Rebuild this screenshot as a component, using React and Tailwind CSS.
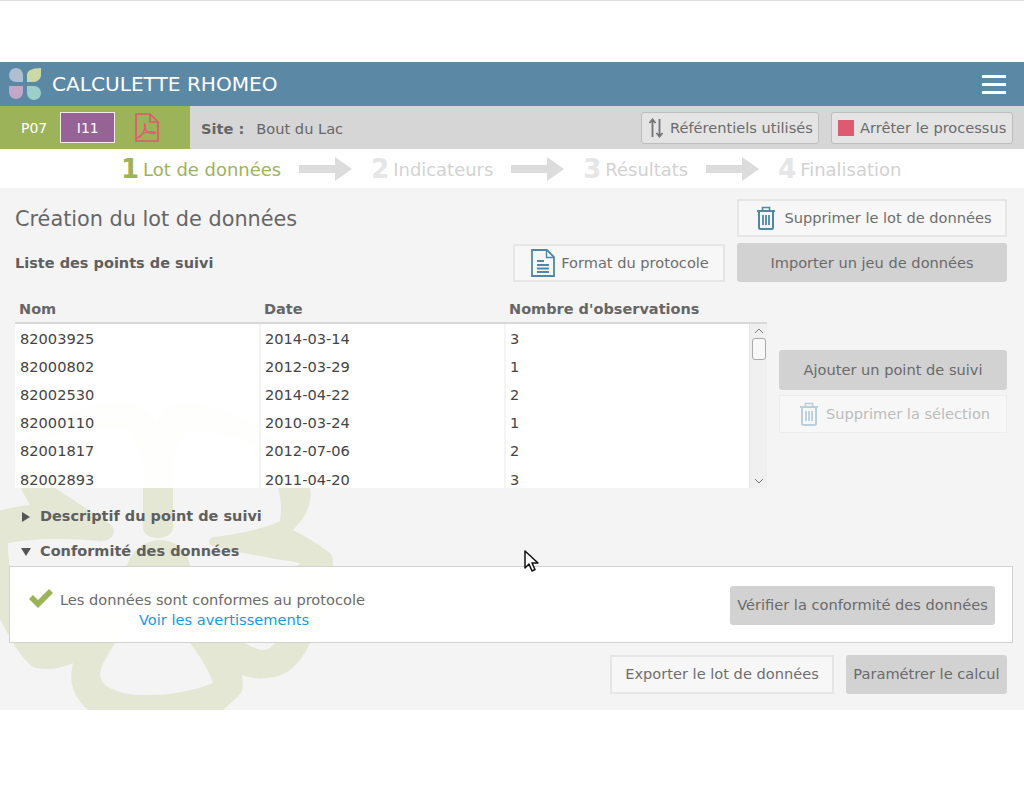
const font = "font-['DejaVu_Sans',sans-serif]";

const rows = [
  ['82003925', '2014-03-14', '3'],
  ['82000802', '2012-03-29', '1'],
  ['82002530', '2014-04-22', '2'],
  ['82000110', '2010-03-24', '1'],
  ['82001817', '2012-07-06', '2'],
  ['82002893', '2011-04-20', '3'],
];

const steps = [
  { n: '1', label: 'Lot de données', active: true },
  { n: '2', label: 'Indicateurs' },
  { n: '3', label: 'Résultats' },
  { n: '4', label: 'Finalisation' },
];

const Logo = () => (
  <svg width="34" height="34" viewBox="0 0 34 34" className="shrink-0">
    <path d="M1 8a7 7 0 0 1 14 0v7H8a7 7 0 0 1-7-7z" fill="#b0bfd0" />
    <path d="M19 15V8c0-4 4-7 14-7v7c0 4-4 7-7 7z" fill="#cdd9a4" />
    <path d="M1 19h14v6a7 7 0 0 1-7 7 7 7 0 0 1-7-7z" fill="#c3a7c6" />
    <path d="M19 19h7a7 7 0 1 1-7 7z" fill="#9ad0c8" />
  </svg>
);

const PdfIcon = () => (
  <svg width="24" height="29" viewBox="0 0 24 29" fill="none" stroke="#e5566f" strokeWidth="1.7">
    <path d="M1 1h14l8 8v19H1z" />
    <path d="M15 1v8h8" />
    <path d="M3 25c3-1 6-6 7-10 .4-2 0-5-.5-4-.8 2 1 6 3 8 2 1.500 7 2 8 1s-5-1.500-8-1-7 3-10 6z" strokeWidth="1.200" />
  </svg>
);

const SortIcon = () => (
  <svg width="16" height="20" viewBox="0 0 16 20" fill="none" stroke="#737373" strokeWidth="1.800">
    <path d="M4.500 19V2M1.500 5l3-3.500 3 3.500" />
    <path d="M11.500 1v17M8.500 15l3 3.500 3-3.500" />
  </svg>
);

const TrashIcon = ({ className }) => (
  <svg width="20" height="24" viewBox="0 0 20 24" fill="none" stroke="currentColor" className={className}>
    <path d="M1 5h18" strokeWidth="2" />
    <path d="M6.500 5V1.500h7V5" strokeWidth="1.600" />
    <path d="M3 5v16.500a1.500 1.500 0 0 0 1.500 1.500h11a1.500 1.500 0 0 0 1.500-1.500V5" strokeWidth="2" />
    <path d="M7 9v10M10 9v10M13 9v10" strokeWidth="1.800" />
  </svg>
);

const DocIcon = () => (
  <svg width="24" height="28" viewBox="0 0 24 28" fill="none" stroke="#4f87a6" strokeWidth="1.800">
    <path d="M1 1h15l7 7v19H1z" />
    <path d="M15.500 1v7.500H23" strokeWidth="1.400" />
    <path d="M6 12h7M6 16h12M6 19.500h12M6 23h12" />
  </svg>
);

const StepArrow = () => (
  <svg width="53" height="24" viewBox="0 0 53 24" className="shrink-0">
    <path d="M0 8h36V0l17 12-17 12v-8H0z" fill="#dcdcdc" />
  </svg>
);

// watermark, drawn in page coordinates (main starts at y=188)
const Flower = () => (
  <svg width="340" height="522" viewBox="0 188 340 522" className="absolute left-0 top-0">
    <path
      fill="#e4e7d3"
      fillRule="evenodd"
      d="M157 423C148 408 136 402 122 402C95 402 60 414 38 428C22 438 14 452 15 466C16 476 18 482 21 488C24 495 27 500 30 505C20 506 8 508 -5 512L-5 610L13 643C20 654 26 662 33 667C45 671 60 669 73 663C71 672 71 680 72 684C74 694 80 703 88 710C100 722 120 730 155 730C190 730 212 722 223 710C234 700 241 695 242 690C243 684 243 680 242 675C250 678 258 679 267 678C278 677 284 674 290 670C298 664 305 654 310 643L332 600L333 565C333 558 332 555 330 553C318 544 305 536 293 530C300 522 306 516 308 508C311 500 311 494 310 488C308 482 305 476 300 468C288 450 275 438 260 428C240 414 212 403 180 403C170 403 162 412 157 423Z
      M55 488L110 524C114 528 115 532 113 535C110 540 105 541 100 541C70 538 35 538 8 543C8 555 9 566 12 575C30 600 70 612 115 612L230 612C255 600 285 585 300 563C270 558 235 552 212 546C208 544 208 539 213 537C235 534 262 530 280 521C282 510 281 498 278 488C274 472 270 462 262 452C245 438 210 428 190 432C180 436 174 452 173 470L173 528C173 534 165 538 158 538C150 538 143 534 143 528L143 470C141 452 135 434 127 430C105 426 65 430 42 440C36 448 38 458 40 462C44 472 50 482 55 488Z
      M135 612L115 643C108 654 101 666 100 673C100 680 104 685 110 688C120 693 130 695 143 695C170 696 195 690 213 683C208 668 199 655 190 643L170 612Z
      M245 632L245 643C252 647 258 650 263 650C268 650 272 647 275 643L278 632Z"
    />
    <path fill="#e4e7d3" d="M127 566C130 552 145 540 160 540C175 540 188 552 190 566L192 612L125 612Z" />
  </svg>
);

const Cursor = () => (
  <svg width="16" height="23" viewBox="0 0 16 23" className="absolute left-[524px] top-[362px]">
    <path d="M1 1v17l4-4 3 7 3-1.500-3-6.500h6z" fill="#fff" stroke="#111" strokeWidth="1.500" strokeLinejoin="round" />
  </svg>
);

const Outline = ({ className, children }) => (
  <button className={`flex items-center justify-center border-2 border-[#e6e6e6] bg-[#f7f7f7] text-[14.6px] text-[#6e6e6e] ${className}`}>
    {children}
  </button>
);

const Filled = ({ className, children }) => (
  <button className={`flex items-center justify-center rounded-[3px] bg-[#d2d2d2] text-[14.6px] text-[#6a6a6a] ${className}`}>
    {children}
  </button>
);

const HeaderButton = ({ className, children }) => (
  <button className={`flex h-[32px] items-center gap-[6px] rounded-[3px] border border-[#bdbdbd] bg-[#e4e4e4] pt-[1px] text-[14.6px] text-[#6b6b6b] ${className}`}>
    {children}
  </button>
);

const Cell = ({ className, children }) => (
  <div className={`h-full border-r-2 border-[#f4f4f2] pl-[4px] pt-[1px] ${className}`}>{children}</div>
);

const App = () => (
  <div className={`${font} h-[787px] w-[1024px] overflow-hidden border-t border-[#dcdcdc] bg-white`}>
    <div className="h-[61px]" />
    <header className="flex h-[44px] items-center bg-[#5b88a5] pl-[8px] pr-[18px]">
      <Logo />
      <span className="ml-[10px] text-[20.1px] text-white">CALCULETTE RHOMEO</span>
      <div className="ml-auto flex w-[24px] flex-col gap-[5px]">
        <span className="h-[3px] bg-white" />
        <span className="h-[3px] bg-white" />
        <span className="h-[3px] bg-white" />
      </div>
    </header>

    <div className="flex h-[43px] bg-[#d6d6d6]">
      <div className="flex w-[190px] items-center bg-[#9db35a] pl-[21px]">
        <span className="pt-[2px] text-[14px] text-white">P07</span>
        <span className="ml-[13px] flex h-[31px] w-[55px] items-center justify-center border border-[#f1ece9] bg-[#956394] pt-[2px] text-[14px] text-white">I11</span>
        <span className="ml-[20px] flex"><PdfIcon /></span>
      </div>
      <div className="flex flex-1 items-center pl-[11px] pr-[11px] text-[14.6px] text-[#666]">
        <b className="pt-[2px]">Site :</b>
        <span className="ml-[12px] pt-[2px]">Bout du Lac</span>
        <HeaderButton className="ml-auto w-[178px] pl-[6px]"><SortIcon />Référentiels utilisés</HeaderButton>
        <HeaderButton className="ml-[12px] w-[182px] pl-[6px]">
          <span className="h-[16px] w-[16px] bg-[#dc5b70]" />
          Arrêter le processus
        </HeaderButton>
      </div>
    </div>

    <nav className="flex h-[39px] items-center pl-[121px] pt-[2px]">
      {steps.map((step, i) => (
        <div key={step.n} className="flex items-center">
          {i > 0 && <span className="ml-[18px] mr-[19px] flex"><StepArrow /></span>}
          <span className={`text-[26px] font-bold leading-none ${step.active ? 'text-[#9db35a]' : 'text-[#e6e6e6]'}`}>{step.n}</span>
          <span className={`ml-[4px] pt-[1px] text-[17.95px] ${step.active ? 'text-[#9db35a]' : 'text-[#d2d2d2]'}`}>{step.label}</span>
        </div>
      ))}
    </nav>

    <main className="relative h-[522px] overflow-hidden bg-[#f4f4f4]">
      <Flower />
      <div className="relative">
        <div className="flex items-start pl-[15px] pr-[17px] pt-[11px]">
          <h1 className="mt-[6px] text-[20.8px] font-normal leading-[28px] text-[#666]">Création du lot de données</h1>
          <Outline className="ml-auto h-[38px] w-[270px] gap-[8px] pl-[4px]">
            <TrashIcon className="text-[#4f87a6]" />
            Supprimer le lot de données
          </Outline>
        </div>

        <div className="mt-[6px] flex items-center pl-[15px] pr-[17px]">
          <h2 className="pt-[2px] text-[14.5px] font-bold text-[#5f5f5f]">Liste des points de suivi</h2>
          <Outline className="ml-auto h-[38px] w-[212px] gap-[6px] pl-[2px] pt-[1px]">
            <DocIcon />
            Format du protocole
          </Outline>
          <Filled className="ml-[12px] h-[39px] w-[270px] pt-[1px]">Importer un jeu de données</Filled>
        </div>

        <div className="mt-[14px] flex pl-[15px] pr-[17px]">
          <div className="w-[752px]">
            <div className="grid h-[28px] grid-cols-[245px_245px_1fr] items-center border-b-2 border-[#d8d8d8] pt-[2px] text-[14.5px] font-bold text-[#666]">
              <span className="pl-[4px]">Nom</span>
              <span className="pl-[4px]">Date</span>
              <span className="pl-[4px]">Nombre d'observations</span>
            </div>
            <div className="flex h-[164px] overflow-hidden bg-white/95">
              <div className="w-[734px]">
                {rows.map((row) => (
                  <div key={row[0]} className="grid h-[28.2px] grid-cols-[246px_245px_1fr] items-center text-[14.6px] text-[#444]">
                    <Cell className="pl-[5px]">
                      <span className="flex h-full items-center">{row[0]}</span>
                    </Cell>
                    <Cell>
                      <span className="flex h-full items-center">{row[1]}</span>
                    </Cell>
                    <span className="pl-[4px] pt-[1px]">{row[2]}</span>
                  </div>
                ))}
              </div>
              <div className="flex w-[18px] flex-col items-center border-l border-[#e6e6e6] bg-[#f0f0f0]">
                <svg width="12" height="8" viewBox="0 0 12 8" fill="none" stroke="#777" className="mt-[3px]"><path d="M2 6l4-4 4 4" /></svg>
                <span className="mt-[3px] h-[22px] w-[14px] rounded-[3px] border border-[#aaa] bg-[#f8f8f8]" />
                <svg width="12" height="8" viewBox="0 0 12 8" fill="none" stroke="#777" className="mb-[3px] mt-auto"><path d="M2 2l4 4 4-4" /></svg>
              </div>
            </div>
          </div>
          <div className="ml-[12px] flex flex-1 flex-col pt-[54px]">
            <Filled className="h-[40px] w-[228px]">Ajouter un point de suivi</Filled>
            <Outline className="mt-[5px] h-[38px] w-[228px] gap-[7px] !border !border-[#ececec] pl-[3px] !text-[#bcbcbc]">
              <TrashIcon className="text-[#b9cfdb]" />
              Supprimer la sélection
            </Outline>
          </div>
        </div>

        <div className="mt-[18px] flex items-center pl-[22px] text-[14.5px] font-bold text-[#5f5f5f]">
          <span className="h-0 w-0 border-y-[5px] border-l-[8px] border-y-transparent border-l-[#555]" />
          <span className="ml-[10px]">Descriptif du point de suivi</span>
        </div>
        <div className="mt-[13px] flex items-center pl-[21px] text-[14.5px] font-bold text-[#5f5f5f]">
          <span className="h-0 w-0 border-x-[5px] border-t-[8px] border-x-transparent border-t-[#555]" />
          <span className="ml-[9px]">Conformité des données</span>
        </div>

        <section className="ml-[9px] mr-[11px] mt-[3px] flex h-[77px] items-center border border-[#d2d2d2] bg-white/[0.97] pl-[19px] pr-[17px]">
          <div className="mt-[10px] flex flex-col">
            <div className="flex items-center gap-[7px] text-[14.6px] text-[#6b6b6b]">
              <svg width="24" height="20" viewBox="0 0 24 20" className="shrink-0">
                <path d="M0 10l4-4 5 5L20 0l4 4L9 19z" fill="#9db35a" />
              </svg>
              Les données sont conformes au protocole
            </div>
            <a className="ml-[110px] text-[14.6px] leading-[19px] text-[#1b9ad6]">Voir les avertissements</a>
          </div>
          <Filled className="ml-auto mt-[2px] h-[39px] w-[265px]">Vérifier la conformité des données</Filled>
        </section>

        <div className="mt-[12px] flex justify-end gap-[12px] pr-[17px]">
          <Outline className="h-[39px] w-[224px]">Exporter le lot de données</Outline>
          <Filled className="h-[39px] w-[161px]">Paramétrer le calcul</Filled>
        </div>
      </div>
      <Cursor />
    </main>
  </div>
);

export default App;
